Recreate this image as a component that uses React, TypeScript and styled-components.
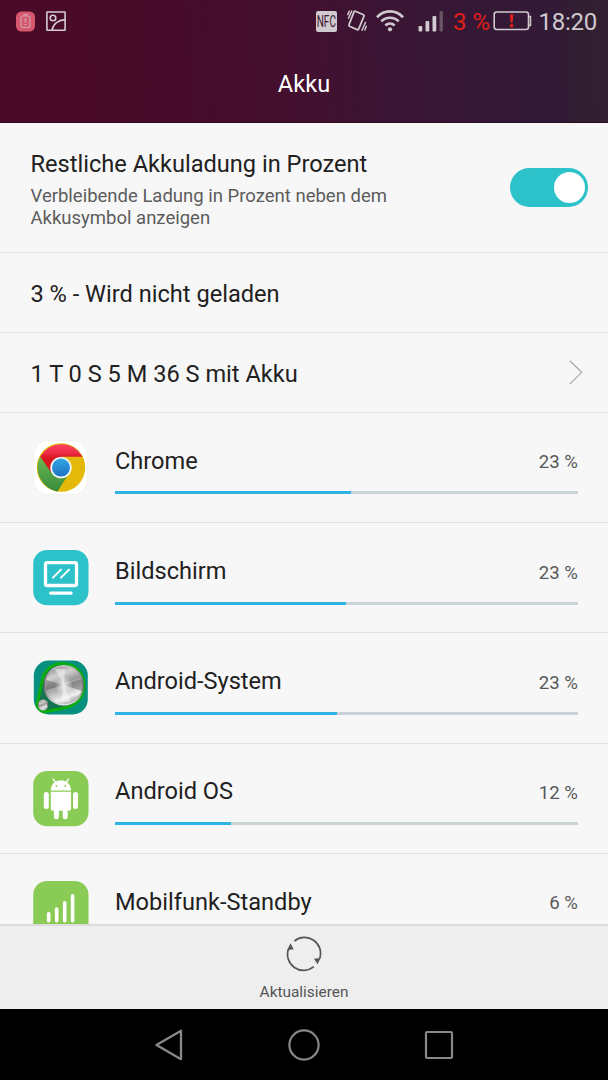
import React from "react";
import styled, { createGlobalStyle } from "styled-components";

const Global = createGlobalStyle`
  * { box-sizing: border-box; }
  html, body { margin: 0; padding: 0; background: #000; }
  body { font-family: Roboto, "Liberation Sans", sans-serif; }
  svg { display: block; flex: none; }
`;

const Screen = styled.div`
  width: 608px;
  height: 1080px;
  display: flex;
  flex-direction: column;
  overflow: hidden;
  background: #f7f7f7;
`;

const Header = styled.header`
  flex: none;
  height: 123px;
  display: flex;
  flex-direction: column;
  border-bottom: 1px solid #2c0a1e;
  background: linear-gradient(87deg, #4a0a27 0%, #480b29 24%, #440f2e 47%, #3b1534 64%, #341836 80%, #321a36 91%, #31202f 97%);
`;

const StatusBar = styled.div`
  height: 42px;
  padding: 0 11px 0 15px;
  display: flex;
  align-items: center;
  justify-content: space-between;
`;

const StatusGroup = styled.div`
  display: flex;
  align-items: center;
`;

const Spacer = styled.span<{ $w: number }>`
  flex: none;
  width: ${(p) => p.$w}px;
`;

const StatusText = styled.span<{ $alert?: boolean }>`
  font-size: 24px;
  line-height: 28px;
  padding-top: 1px;
  letter-spacing: ${(p) => (p.$alert ? "0" : "-0.25px")};
  white-space: nowrap;
  color: ${(p) => (p.$alert ? "#e02018" : "#d0c9ce")};
`;

const HeaderTitle = styled.h1`
  margin: 0;
  padding-top: 28px;
  text-align: center;
  font-size: 23.6px;
  line-height: 28px;
  font-weight: 400;
  color: #fff;
`;

const Content = styled.main`
  flex: 1;
  min-height: 0;
  overflow: hidden;
`;

const SettingRow = styled.section<{ $h: number; $right: number }>`
  height: ${(p) => p.$h}px;
  padding: 0 ${(p) => p.$right}px 0 30.5px;
  display: flex;
  align-items: center;
  justify-content: space-between;
  border-bottom: 1px solid #dfe2e2;
`;

const SettingText = styled.div<{ $top: number }>`
  padding-top: ${(p) => p.$top}px;
`;

const Label = styled.div`
  font-size: 23.6px;
  line-height: 28px;
  color: #212121;
  white-space: nowrap;
`;

const Description = styled.p`
  margin: 7px 0 0;
  width: 400px;
  font-size: 18.5px;
  line-height: 22px;
  color: #5c5c5c;
`;

const Switch = styled.button`
  flex: none;
  width: 78px;
  height: 39px;
  padding: 0 3px;
  border: 0;
  border-radius: 20px;
  background: #2dc1c9;
  display: flex;
  align-items: center;
  justify-content: flex-end;
`;

const Knob = styled.span`
  width: 31px;
  height: 31px;
  border-radius: 50%;
  background: #fff;
`;

const AppRow = styled.section`
  height: 110.2px;
  padding: 27px 30px 0 33px;
  display: flex;
  gap: 26px;
  border-bottom: 1px solid #dfe2e2;
`;

const Usage = styled.div`
  flex: 1;
  padding-top: 6.9px;
`;

const UsageHead = styled.div`
  height: 28px;
  display: flex;
  justify-content: space-between;
`;

const Percent = styled.span`
  padding-top: 4.6px;
  font-size: 18.6px;
  line-height: 22px;
  color: #595959;
`;

const Track = styled.div`
  margin-top: 16.5px;
  height: 3px;
  background: #cbd3d6;
`;

const Fill = styled.div`
  height: 100%;
  background: #2fb3e4;
`;

const ActionBar = styled.footer`
  flex: none;
  height: 85px;
  padding-top: 10px;
  display: flex;
  flex-direction: column;
  align-items: center;
  background: #eee;
  border-top: 2px solid #dcdcdc;
`;

const ActionLabel = styled.span`
  margin-top: 11px;
  font-size: 15.4px;
  line-height: 18px;
  color: #555;
`;

const NavBar = styled.nav`
  flex: none;
  height: 71px;
  padding: 1px 154px 0 154px;
  display: flex;
  align-items: center;
  justify-content: space-between;
  background: #000;
`;

const AlertIcon = () => (
  <svg width="21" height="21" viewBox="0 0 21 21" fill="none">
    <rect x="1" y="0.5" width="19" height="20" rx="5.5" fill="#d5566d" />
    <rect x="6" y="5" width="9" height="11.5" rx="2" stroke="#d3a0ab" strokeWidth="1.2" />
    <path d="M8.3 3.8h4.4M10.5 7.3v4.2M10.5 13v1.5" stroke="#d3a0ab" strokeWidth="1.6" />
  </svg>
);

const PictureIcon = () => (
  <svg width="20" height="20" viewBox="0 0 20 20" fill="none" stroke="#d4cdd2" strokeWidth="1.6">
    <rect x="0.9" y="1" width="18.2" height="18.2" rx="0.5" />
    <circle cx="7" cy="7" r="2.8" />
    <path d="M6.1 19C7 13.2 12 9.2 19 8.6" />
  </svg>
);

const NfcBadge = styled.div`
  flex: none;
  width: 21px;
  height: 21px;
  display: flex;
  align-items: center;
  justify-content: center;
  border-radius: 2px;
  background: #d0c9ce;
`;

const NfcText = styled.span`
  font-size: 17px;
  line-height: 21px;
  font-weight: 400;
  color: #3d1732;
  transform: scaleX(0.59);
`;

const VibrateIcon = () => (
  <svg width="20" height="22" viewBox="0 0 20 22" fill="none" stroke="#d0c9ce" strokeLinecap="round">
    <path d="M8.4 1.3l8 3.5q1.1.5.5 1.6l-5.2 12.5q-.5 1.1-1.5.7l-7.7-3.3q-1-.5-.5-1.600L7 1.900q.4-1 1.400-.6z" strokeWidth="1.800" />
    <path d="M4.700 1L1.500 8.200M2.200 1.200L.8 4.600M18.400 12.500l-3.400 7.700M19.300 16.200l-1.500 3.800" strokeWidth="1.500" />
  </svg>
);

const WifiIcon = () => (
  <svg width="28" height="22" viewBox="0 0 28 22" fill="none" stroke="#d0c9ce" strokeWidth="2.7">
    <path d="M1 7.3C8.4-.5 19.6-.5 27 7.3M5.3 11.4C10.2 6.5 17.8 6.5 22.7 11.4M9.4 15.5C12.2 12.8 15.8 12.8 18.6 15.5" />
    <circle cx="14" cy="19.3" r="2.1" fill="#d0c9ce" stroke="none" />
  </svg>
);

const CellIcon = () => (
  <svg width="25" height="22" viewBox="0 0 25 22" fill="#d0c9ce">
    <rect x="0.5" y="16" width="3.8" height="5.6" rx="1" />
    <rect x="7.5" y="11" width="3.8" height="10.6" rx="1" />
    <rect x="14.5" y="6" width="3.8" height="15.6" rx="1" />
    <rect x="21.5" y="1" width="3.4" height="20.6" rx="1" fill="#695562" />
  </svg>
);

const BatteryIcon = () => (
  <svg width="39" height="20" viewBox="0 0 39 20" fill="none">
    <rect x="1.2" y="1" width="34.3" height="17.5" rx="2.5" stroke="#d0c9ce" strokeWidth="1.6" />
    <path d="M36 5.5h1.5v9H36" stroke="#d0c9ce" strokeWidth="1.5" />
    <path d="M16.8 3.5h3.6l-.8 8.2h-2zM17 13.3h3.2v3H17z" fill="#e02018" />
  </svg>
);

const ChromeIcon = () => (
  <svg width="56" height="56" viewBox="0 0 56 56">
    <defs>
      <linearGradient id="cr" x1="0" y1="0" x2="0" y2="1"><stop offset="0" stopColor="#f9415e" /><stop offset=".3" stopColor="#ee2d4a" /><stop offset=".5" stopColor="#d81920" /></linearGradient>
      <linearGradient id="cg" x1="0" y1="0" x2="0" y2="1"><stop offset="0" stopColor="#6db851" /><stop offset="1" stopColor="#378b3b" /></linearGradient>
      <linearGradient id="cb" x1="0" y1="0" x2="0" y2="1"><stop offset="0" stopColor="#33a9e2" /><stop offset="1" stopColor="#1d6fc4" /></linearGradient>
    </defs>
    <rect x="0.7" y="0.5" width="53.6" height="54" rx="14" fill="#fff" stroke="#ececec" strokeWidth=".7" />
    <circle cx="28" cy="27.5" r="24.3" fill="#e4b90a" />
    <path d="M7.2 16.5A24.3 24.3 0 0 0 24.5 51.5L36.6 32.5 18.5 31z" fill="url(#cg)" />
    <path d="M7.2 16.5A24.3 24.3 0 0 1 49.6 16.7H28L17.8 32z" fill="url(#cr)" />
    <circle cx="28" cy="27.6" r="10.7" fill="#f4f6f5" />
    <circle cx="28" cy="27.6" r="9" fill="url(#cb)" />
  </svg>
);

const DisplayIcon = () => (
  <svg width="56" height="56" viewBox="0 0 56 56" fill="none" stroke="#fff" strokeLinecap="round">
    <rect x="0.2" y="0" width="55.3" height="55.3" rx="14" fill="#2dc1c9" stroke="none" />
    <rect x="12.5" y="12.7" width="31" height="22.8" rx="1.8" strokeWidth="3.3" />
    <path d="M17.7 43.1H38" strokeWidth="3.4" />
    <path d="M20 27.6l8-8M28 27.6l8-8" strokeWidth="2" />
  </svg>
);

const SystemIcon = () => (
  <svg width="56" height="56" viewBox="0 0 56 56">
    <defs>
      <clipPath id="sys"><rect x="0.8" y="0.5" width="54" height="54" rx="15" /></clipPath>
      <linearGradient id="metal" x1="0.2" y1="0" x2="0.6" y2="1"><stop offset="0" stopColor="#909090" /><stop offset=".25" stopColor="#d2d2d2" /><stop offset=".48" stopColor="#999" /><stop offset=".62" stopColor="#b8b8b8" /><stop offset=".85" stopColor="#f0f0f0" /><stop offset="1" stopColor="#a5a5a5" /></linearGradient>
      <linearGradient id="rim" x1="0" y1="0" x2="0" y2="1"><stop offset="0" stopColor="#ccc" /><stop offset=".5" stopColor="#606060" /><stop offset="1" stopColor="#e8e8e8" /></linearGradient>
      <radialGradient id="glow"><stop offset="0" stopColor="#fff" stopOpacity=".85" /><stop offset="1" stopColor="#fff" stopOpacity="0" /></radialGradient>
    </defs>
    <g clipPath="url(#sys)">
      <rect width="56" height="56" fill="#078f80" />
      <path d="M3.8 45L9.8 18C14 3.200 29 1 40 6 52.500 13 55 31 44.500 41.500 41 45.500 35 47.500 29 48.500L12 51.800Q4 53 3.800 45z" fill="#16734f" stroke="#0aad0e" strokeWidth="3" />
      <circle cx="30.8" cy="25.3" r="20.3" fill="url(#rim)" />
      <circle cx="30.8" cy="25.2" r="18.6" fill="url(#metal)" />
      <path d="M30.8 25L13 20v10zM30.8 25L49 19v12z" fill="#4c4c4c" opacity=".4" />
      <path d="M30.8 25L22 9h10zM30.8 25L28 43l10-1z" fill="#fff" opacity=".45" />
      <circle cx="30.8" cy="25.2" r="9" fill="url(#glow)" />
      <circle cx="10" cy="45" r="5.4" fill="url(#rim)" />
      <circle cx="10" cy="45" r="4.3" fill="url(#metal)" />
    </g>
  </svg>
);

const RobotIcon = () => (
  <svg width="56" height="56" viewBox="0 0 56 56" fill="#fff">
    <rect x="0.2" y="0" width="55.3" height="55.3" rx="14" fill="#8acb55" />
    <path d="M17.7 19.5C18 13 22.5 9.3 27.900 9.300S37.700 13 38 19.500z" />
    <path d="M20 8l3 4M35.600 8l-3 4" stroke="#fff" strokeWidth="1.300" strokeLinecap="round" />
    <circle cx="23.4" cy="15" r=".9" fill="#8acb55" />
    <circle cx="32.3" cy="15" r=".9" fill="#8acb55" />
    <path d="M17.8 20.8h20.3v16.7q0 2.3-2.3 2.3H20q-2.2 0-2.2-2.3z" />
    <rect x="10.8" y="21" width="5" height="17" rx="2.5" />
    <rect x="40" y="21" width="5" height="17" rx="2.5" />
    <rect x="20.9" y="36" width="5" height="12.3" rx="2.4" />
    <rect x="29.7" y="36" width="5" height="12.3" rx="2.4" />
  </svg>
);

const StandbyIcon = () => (
  <svg width="56" height="56" viewBox="0 0 56 56" fill="#fff">
    <rect x="0.2" y="0" width="55.3" height="55.3" rx="14" fill="#8acb55" />
    <rect x="13.9" y="31" width="3.6" height="10.5" rx="1.7" />
    <rect x="21.9" y="26.3" width="3.6" height="15.2" rx="1.7" />
    <rect x="29.9" y="20" width="3.6" height="21.5" rx="1.7" />
    <rect x="37.8" y="13" width="3.6" height="28.5" rx="1.7" />
  </svg>
);

const Chevron = () => (
  <svg width="14" height="25" viewBox="0 0 14 25" fill="none" stroke="#a6a6a6" strokeWidth="1.2">
    <path d="M.8 .7L12.7 12.3.8 24.2" />
  </svg>
);

const RefreshIcon = () => (
  <svg width="36" height="36" viewBox="0 0 36 36" fill="none" stroke="#555" strokeWidth="1.7">
    <path d="M8.4 5A16 16 0 0 1 33.7 22.5M27.8 30.7A16 16 0 0 1 2.5 13" />
    <path d="M4.5 7.3l3.2 6-6.7 1zM31.5 28.2l-3.5-5.5 6.6-.7z" fill="#555" stroke="none" />
  </svg>
);

const BackIcon = () => (
  <svg width="30" height="32" viewBox="0 0 30 32" fill="none" stroke="#888" strokeWidth="2.3" strokeLinejoin="round">
    <path d="M27 1.8v28.4L2.5 16z" />
  </svg>
);

const HomeIcon = () => (
  <svg width="32" height="32" viewBox="0 0 32 32" fill="none" stroke="#888" strokeWidth="2.2">
    <circle cx="16" cy="16" r="14.6" />
  </svg>
);

const RecentIcon = () => (
  <svg width="30" height="30" viewBox="0 0 30 30" fill="none" stroke="#888" strokeWidth="2.2">
    <rect x="2" y="2" width="26" height="26" rx="1" />
  </svg>
);

const apps = [
  { name: "Chrome", percent: "23 %", fill: 51, Icon: ChromeIcon },
  { name: "Bildschirm", percent: "23 %", fill: 49.9, Icon: DisplayIcon },
  { name: "Android-System", percent: "23 %", fill: 48, Icon: SystemIcon },
  { name: "Android OS", percent: "12 %", fill: 25, Icon: RobotIcon },
  { name: "Mobilfunk-Standby", percent: "6 %", fill: 13, Icon: StandbyIcon },
];

export default function App() {
  return (
    <>
      <Global />
      <Screen>
        <Header>
          <StatusBar>
            <StatusGroup>
              <AlertIcon />
              <Spacer $w={10} />
              <PictureIcon />
            </StatusGroup>
            <StatusGroup>
              <NfcBadge>
                <NfcText>NFC</NfcText>
              </NfcBadge>
              <Spacer $w={10.5} />
              <VibrateIcon />
              <Spacer $w={9} />
              <WifiIcon />
              <Spacer $w={13.5} />
              <CellIcon />
              <Spacer $w={10} />
              <StatusText $alert>3 %</StatusText>
              <Spacer $w={3} />
              <BatteryIcon />
              <Spacer $w={6.5} />
              <StatusText>18:20</StatusText>
            </StatusGroup>
          </StatusBar>
          <HeaderTitle>Akku</HeaderTitle>
        </Header>
        <Content>
          <SettingRow $h={130} $right={20}>
            <SettingText $top={4}>
              <Label>Restliche Akkuladung in Prozent</Label>
              <Description>Verbleibende Ladung in Prozent neben dem Akkusymbol anzeigen</Description>
            </SettingText>
            <Switch aria-label="Restliche Akkuladung in Prozent">
              <Knob />
            </Switch>
          </SettingRow>
          <SettingRow $h={80} $right={20}>
            <SettingText $top={2}>
              <Label>3 % - Wird nicht geladen</Label>
            </SettingText>
          </SettingRow>
          <SettingRow $h={80} $right={25}>
            <SettingText $top={2}>
              <Label>1 T 0 S 5 M 36 S mit Akku</Label>
            </SettingText>
            <Chevron />
          </SettingRow>
          {apps.map(({ name, percent, fill, Icon }) => (
            <AppRow key={name}>
              <Icon />
              <Usage>
                <UsageHead>
                  <Label>{name}</Label>
                  <Percent>{percent}</Percent>
                </UsageHead>
                <Track>
                  <Fill style={{ width: `${fill}%` }} />
                </Track>
              </Usage>
            </AppRow>
          ))}
        </Content>
        <ActionBar>
          <RefreshIcon />
          <ActionLabel>Aktualisieren</ActionLabel>
        </ActionBar>
        <NavBar>
          <BackIcon />
          <HomeIcon />
          <RecentIcon />
        </NavBar>
      </Screen>
    </>
  );
}
